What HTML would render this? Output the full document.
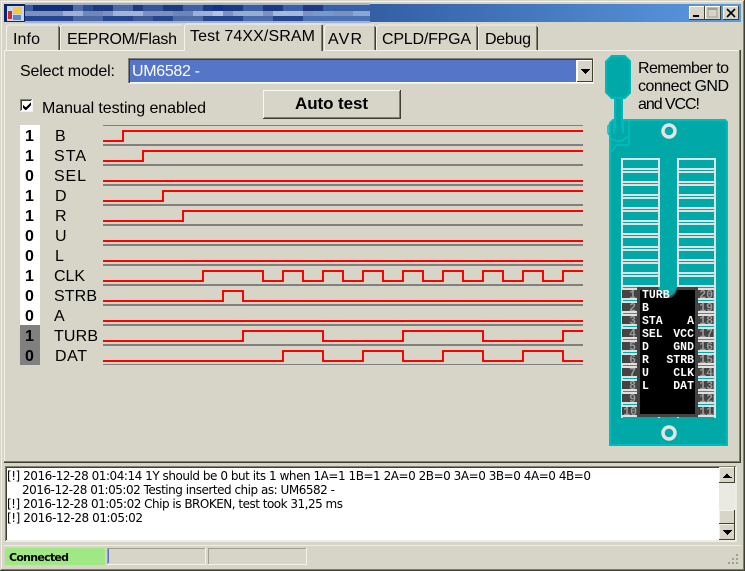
<!DOCTYPE html>
<html><head><meta charset="utf-8"><style>
html,body{margin:0;padding:0;background:#d7d5c8;width:745px;height:571px;overflow:hidden}
svg{display:block}
text{font-family:"Liberation Sans",sans-serif;fill:#000;font-size:16px}
.l text{font-size:12px;font-family:"DejaVu Sans","Liberation Sans",sans-serif}
.m text{font-family:"Liberation Mono",monospace;font-weight:bold;font-size:11.5px}
</style></head><body>
<svg width="745" height="571" viewBox="0 0 745 571" xmlns="http://www.w3.org/2000/svg" shape-rendering="crispEdges">
<defs><linearGradient id="tb" x1="0" x2="1" y1="0" y2="0"><stop offset="0" stop-color="#0a246a"/><stop offset="1" stop-color="#5c9ae0"/></linearGradient></defs>
<rect width="745" height="571" fill="#d7d5c8"/>
<!-- window frame -->
<rect x="0" y="570" width="745" height="1" fill="#404030"/><rect x="744" y="0" width="1" height="571" fill="#404030"/>
<rect x="743" y="1" width="1" height="569" fill="#817f70"/><rect x="1" y="569" width="743" height="1" fill="#817f70"/>
<rect x="1" y="1" width="742" height="1" fill="#f2f1ea"/><rect x="1" y="1" width="1" height="568" fill="#f2f1ea"/>
<!-- title -->
<rect x="4" y="4" width="737" height="18" fill="url(#tb)"/>
<rect x="25" y="3" width="345" height="20" fill="#a4b2d0"/>
<rect x="25" y="5" width="345" height="6" fill="#1c3a82"/>
<rect x="25" y="16" width="345" height="5" fill="#24468e"/>
<rect x="25" y="11" width="345" height="5" fill="#7d90c0"/>
<rect x="25" y="5" width="8" height="6" fill="#3e5c9c"/><rect x="33" y="5" width="40" height="6" fill="#10307a"/><rect x="73" y="5" width="10" height="6" fill="#4f6ca8"/><rect x="83" y="5" width="10" height="6" fill="#2a4c92"/><rect x="113" y="5" width="20" height="6" fill="#4a68a8"/><rect x="143" y="5" width="20" height="6" fill="#345698"/><rect x="183" y="5" width="20" height="6" fill="#3f60a2"/><rect x="213" y="5" width="10" height="6" fill="#123484"/><rect x="243" y="5" width="20" height="6" fill="#3a5ea4"/><rect x="283" y="5" width="20" height="6" fill="#3a60a6"/><rect x="323" y="5" width="47" height="6" fill="#3660a8"/>
<rect x="63" y="11" width="20" height="5" fill="#a0b0d4"/><rect x="83" y="11" width="20" height="5" fill="#7088b8"/><rect x="113" y="11" width="30" height="5" fill="#a4b2d4"/><rect x="173" y="11" width="20" height="5" fill="#6c86ba"/><rect x="193" y="11" width="20" height="5" fill="#a0b0d4"/><rect x="213" y="11" width="10" height="5" fill="#b4c4e0"/><rect x="233" y="11" width="30" height="5" fill="#98acd0"/><rect x="273" y="11" width="30" height="5" fill="#a8b8d8"/><rect x="313" y="11" width="20" height="5" fill="#7c98c8"/><rect x="353" y="11" width="17" height="5" fill="#8ca6d4"/>
<rect x="73" y="16" width="30" height="5" fill="#4a68a6"/><rect x="133" y="16" width="20" height="5" fill="#3a5a9c"/><rect x="173" y="16" width="30" height="5" fill="#4d6ca8"/><rect x="243" y="16" width="30" height="5" fill="#4a6cac"/><rect x="303" y="16" width="67" height="5" fill="#4a72b4"/>
<!-- app icon -->
<rect x="4" y="4" width="21" height="18" fill="#0a246a"/><rect x="7" y="6" width="17" height="15" fill="#c8d8e8"/>
<rect x="8" y="11" width="4" height="8" fill="#c83030"/><rect x="13" y="7" width="9" height="7" fill="#f8c838"/><rect x="13" y="15" width="8" height="5" fill="#5888d0"/>
<!-- title buttons -->
<g>
<rect x="689" y="6" width="16" height="14" fill="#d7d5c8"/><path d="M689 6h15v1h-15zM689 6h1v13h-1z" fill="#fff"/><path d="M704 6h1v14h-1zM689 19h16v1h-16z" fill="#404030"/><rect x="693" y="15" width="6" height="2" fill="#000"/>
<rect x="705" y="6" width="16" height="14" fill="#d7d5c8"/><path d="M705 6h15v1h-15zM705 6h1v13h-1z" fill="#fff"/><path d="M720 6h1v14h-1zM705 19h16v1h-16z" fill="#404030"/><rect x="708" y="8" width="9" height="9" fill="none" stroke="#a09e90" stroke-width="1"/><rect x="708" y="8" width="9" height="2" fill="#a09e90"/>
<rect x="723" y="6" width="16" height="14" fill="#d7d5c8"/><path d="M723 6h15v1h-15zM723 6h1v13h-1z" fill="#fff"/><path d="M738 6h1v14h-1zM723 19h16v1h-16z" fill="#404030"/><path d="M727 9l8 8M735 9l-8 8" stroke="#000" stroke-width="1.6" fill="none" shape-rendering="auto"/>
</g>
<!-- panel -->
<rect x="4" y="50" width="737" height="1" fill="#f2f1ea"/><rect x="4" y="50" width="1" height="412" fill="#f2f1ea"/>
<rect x="739" y="50" width="1" height="412" fill="#817f70"/><rect x="740" y="50" width="1" height="413" fill="#404030"/>
<rect x="4" y="461" width="736" height="1" fill="#817f70"/><rect x="4" y="462" width="737" height="1" fill="#404030"/>
<!-- tabs -->
<g fill="none">
<path d="M6.5 50V27l2-2H58" stroke="#f2f1ea"/><path d="M58.5 26V50" stroke="#817f70"/><path d="M59.5 27V50" stroke="#404030"/>
<path d="M60.5 50V27l2-2H182" stroke="#f2f1ea"/>
<path d="M324.5 50V27l2-2H374" stroke="#f2f1ea"/><path d="M374.5 26V50" stroke="#817f70"/><path d="M375.5 27V50" stroke="#404030"/>
<path d="M376.5 50V27l2-2H476" stroke="#f2f1ea"/><path d="M476.5 26V50" stroke="#817f70"/><path d="M477.5 27V50" stroke="#404030"/>
<path d="M478.5 50V27l2-2H536" stroke="#f2f1ea"/><path d="M536.5 26V50" stroke="#817f70"/><path d="M537.5 27V50" stroke="#404030"/>
</g>
<rect x="184" y="25" width="139" height="27" fill="#d7d5c8"/>
<path d="M184.5 51V26l2-2H321" stroke="#f2f1ea" fill="none"/><rect x="322" y="25" width="1" height="26" fill="#404030"/><rect x="321" y="25" width="1" height="26" fill="#817f70"/>
<text x="13" y="44" textLength="27">Info</text>
<text x="67" y="44" textLength="110">EEPROM/Flash</text>
<text x="190" y="41" textLength="125">Test 74XX/SRAM</text>
<text x="328" y="44" textLength="34">AVR</text>
<text x="382" y="44" textLength="89">CPLD/FPGA</text>
<text x="485" y="44" textLength="46">Debug</text>
<!-- model row -->
<text x="20" y="76" textLength="95">Select model:</text>
<rect x="128" y="58" width="466" height="26" fill="#eeede5"/>
<rect x="128" y="58" width="465" height="1" fill="#817f70"/><rect x="128" y="58" width="1" height="25" fill="#817f70"/>
<rect x="129" y="59" width="464" height="1" fill="#404030"/><rect x="129" y="59" width="1" height="24" fill="#404030"/>
<rect x="130" y="60" width="463" height="23" fill="#fff"/>
<rect x="130" y="60" width="446" height="22" fill="#5575c9"/>
<text x="132" y="76" textLength="68" style="fill:#fff">UM6582 -</text>
<rect x="577" y="60" width="16" height="22" fill="#d7d5c8"/><path d="M577 60h15v1h-15zM577 60h1v21h-1z" fill="#fff"/><path d="M592 60h1v22h-1zM577 81h16v1h-16z" fill="#404030"/>
<path d="M581 69h9v1h-1v1h-1v1h-1v1h-1v1h-1v-1h-1v-1h-1v-1h-1v-1h-1z" fill="#000"/>
<!-- checkbox -->
<rect x="20" y="99" width="13" height="13" fill="#f2f1ea"/><rect x="20" y="99" width="12" height="1" fill="#817f70"/><rect x="20" y="99" width="1" height="12" fill="#817f70"/><rect x="21" y="100" width="10" height="1" fill="#404030"/><rect x="21" y="100" width="1" height="10" fill="#404030"/><rect x="22" y="101" width="10" height="10" fill="#fff"/>
<path d="M23 105v3l2 2 1 0 5-5v-3l-5 5h-1z" fill="#000"/>
<text x="42" y="113" textLength="164">Manual testing enabled</text>
<!-- button -->
<rect x="263" y="90" width="138" height="29" fill="#d7d5c8"/><path d="M263 90h137v1h-137zM263 90h1v28h-1z" fill="#f8f8f2"/><path d="M400 90h1v29h-1zM263 118h138v1h-138z" fill="#404030"/><path d="M399 91h1v27h-1zM264 117h136v1h-136z" fill="#817f70"/>
<text x="295" y="109" textLength="73" style="font-weight:bold;font-size:17px">Auto test</text>
<!-- values -->
<rect x="20" y="125" width="20" height="200" fill="#fff"/><rect x="20" y="325" width="20" height="40" fill="#808080"/>
<g text-anchor="middle">
<text x="29.500" y="141" style="font-weight:bold">1</text><text x="29.500" y="161" style="font-weight:bold">1</text><text x="29.500" y="181" style="font-weight:bold">0</text><text x="29.500" y="201" style="font-weight:bold">1</text><text x="29.500" y="221" style="font-weight:bold">1</text><text x="29.500" y="241" style="font-weight:bold">0</text><text x="29.500" y="261" style="font-weight:bold">0</text><text x="29.500" y="281" style="font-weight:bold">1</text><text x="29.500" y="301" style="font-weight:bold">0</text><text x="29.500" y="321" style="font-weight:bold">0</text><text x="29.500" y="341" style="font-weight:bold">1</text><text x="29.500" y="361" style="font-weight:bold">0</text>
</g>
<text x="55" y="141">B</text><text x="54" y="161" textLength="32">STA</text><text x="54" y="181" textLength="32">SEL</text><text x="55" y="201">D</text><text x="55" y="221">R</text><text x="55" y="241">U</text><text x="55" y="261">L</text><text x="54" y="281" textLength="31">CLK</text><text x="54" y="301" textLength="43">STRB</text><text x="54" y="321">A</text><text x="54" y="341" textLength="44">TURB</text><text x="55" y="361" textLength="32">DAT</text>
<!-- grey lines -->
<g fill="#808080">
<rect x="103" y="125" width="480" height="1"/>
<rect x="103" y="144" width="480" height="2"/><rect x="103" y="164" width="480" height="2"/><rect x="103" y="184" width="480" height="2"/><rect x="103" y="204" width="480" height="2"/><rect x="103" y="224" width="480" height="2"/><rect x="103" y="244" width="480" height="2"/><rect x="103" y="264" width="480" height="2"/><rect x="103" y="284" width="480" height="2"/><rect x="103" y="304" width="480" height="2"/><rect x="103" y="324" width="480" height="2"/><rect x="103" y="344" width="480" height="2"/><rect x="103" y="364" width="480" height="1"/>
</g>
<!-- waves -->
<g fill="none" stroke="#ff0000" stroke-width="2" stroke-linejoin="miter" shape-rendering="geometricPrecision">
<path d="M103 141H123V131H583"/>
<path d="M103 161H143V151H583"/>
<path d="M103 181H583"/>
<path d="M103 201H163V191H583"/>
<path d="M103 221H183V211H583"/>
<path d="M103 241H583"/>
<path d="M103 261H583"/>
<path d="M103 281H203V271H263V281H283V271H303V281H323V271H343V281H363V271H383V281H403V271H423V281H443V271H463V281H483V271H503V281H523V271H543V281H563V271H583"/>
<path d="M103 301H223V291H243V301H583"/>
<path d="M103 321H583"/>
<path d="M103 341H243V331H323V341H403V331H483V341H563V331H583"/>
<path d="M103 361H283V351H323V361H363V351H403V361H443V351H483V361H523V351H563V361H583"/>
</g>
<!-- note -->
<text x="638" y="73" textLength="91">Remember to</text>
<text x="638" y="91" textLength="91">connect GND</text>
<text x="638" y="109" textLength="62">and VCC!</text>
<!-- socket -->
<path d="M610 445V123l3-3H725l2 2V445z" fill="#00a8a8" stroke="#00bcbc" stroke-width="2" shape-rendering="auto"/>
<!-- lever -->
<path d="M611 55H625L631 61V93L625 99H623V128H614V99H611L605 93V61z" fill="#00b8b8"/>
<path d="M612 57H624L629 62V92L624 97H612L607 92V62z" fill="#00a8a8"/>
<rect x="616" y="99" width="5" height="29" fill="#00a8a8"/>
<path d="M614 120V133M623 120V133M611 123L608 126V133L610 136V138L616 141H622L627 137M629 120V145H617L611 152M610 138V150" fill="none" stroke="#00c0c0" stroke-width="1.500" shape-rendering="auto"/>
<!-- holes -->
<circle cx="669" cy="131" r="6" fill="none" stroke="#e4e4e4" stroke-width="3.500" shape-rendering="auto"/>
<circle cx="669" cy="433" r="6" fill="none" stroke="#e4e4e4" stroke-width="3.500" shape-rendering="auto"/>
<!-- slots -->
<rect x="621" y="158" width="39" height="260" fill="#e0e0e0"/><rect x="677" y="158" width="39" height="260" fill="#e0e0e0"/>
<path d="M640.500 160V418M696.500 160V418" stroke="#00a8a8" stroke-width="35" stroke-dasharray="8 2 1 2" fill="none"/>
<!-- chip -->
<path d="M637 287H658C659 292 663 296 668 296C673 296 676 292 677 287H698V417H637z" fill="#444"/>
<path d="M640 290H660C662 295 665 298 669 298C673 298 676 295 677 290H695V414H640z" fill="#000"/>
<path d="M658 287H677C676 292 673 295 668 295C663 295 659 292 658 287z" fill="#00a8a8" shape-rendering="auto"/>
<!-- pins -->
<g fill="#444">
<rect x="622" y="290" width="15" height="8"/><rect x="622" y="303" width="15" height="8"/><rect x="622" y="316" width="15" height="8"/><rect x="622" y="329" width="15" height="8"/><rect x="622" y="342" width="15" height="8"/><rect x="622" y="355" width="15" height="8"/><rect x="622" y="368" width="15" height="8"/><rect x="622" y="381" width="15" height="8"/><rect x="622" y="394" width="15" height="8"/><rect x="622" y="407" width="15" height="8"/>
<rect x="698" y="290" width="15" height="8"/><rect x="698" y="303" width="15" height="8"/><rect x="698" y="316" width="15" height="8"/><rect x="698" y="329" width="15" height="8"/><rect x="698" y="342" width="15" height="8"/><rect x="698" y="355" width="15" height="8"/><rect x="698" y="368" width="15" height="8"/><rect x="698" y="381" width="15" height="8"/><rect x="698" y="394" width="15" height="8"/><rect x="698" y="407" width="15" height="8"/>
</g>
<g class="m" text-anchor="end">
<text x="636" y="298" style="fill:#999">1</text><text x="636" y="311" style="fill:#999">2</text><text x="636" y="324" style="fill:#999">3</text><text x="636" y="337" style="fill:#999">4</text><text x="636" y="350" style="fill:#999">5</text><text x="636" y="363" style="fill:#999">6</text><text x="636" y="376" style="fill:#999">7</text><text x="636" y="389" style="fill:#999">8</text><text x="636" y="402" style="fill:#999">9</text><text x="637" y="415" style="fill:#999">10</text>
<text x="713" y="298" style="fill:#999">20</text><text x="713" y="311" style="fill:#999">19</text><text x="713" y="324" style="fill:#999">18</text><text x="713" y="337" style="fill:#999">17</text><text x="713" y="350" style="fill:#999">16</text><text x="713" y="363" style="fill:#999">15</text><text x="713" y="376" style="fill:#999">14</text><text x="713" y="389" style="fill:#999">13</text><text x="713" y="402" style="fill:#999">12</text><text x="713" y="415" style="fill:#999">11</text>
<text x="694" y="324" style="fill:#fff">A</text><text x="694" y="337" style="fill:#fff">VCC</text><text x="694" y="350" style="fill:#fff">GND</text><text x="694" y="363" style="fill:#fff">STRB</text><text x="694" y="376" style="fill:#fff">CLK</text><text x="694" y="389" style="fill:#fff">DAT</text>
</g>
<g class="m">
<text x="642" y="298" style="fill:#fff">TURB</text><text x="642" y="311" style="fill:#fff">B</text><text x="642" y="324" style="fill:#fff">STA</text><text x="642" y="337" style="fill:#fff">SEL</text><text x="642" y="350" style="fill:#fff">D</text><text x="642" y="363" style="fill:#fff">R</text><text x="642" y="376" style="fill:#fff">U</text><text x="642" y="389" style="fill:#fff">L</text>
</g>
<!-- log -->
<rect x="5" y="466" width="732" height="76" fill="#eeede5"/>
<rect x="5" y="466" width="731" height="1" fill="#817f70"/><rect x="5" y="466" width="1" height="75" fill="#817f70"/>
<rect x="6" y="467" width="729" height="1" fill="#404030"/><rect x="6" y="467" width="1" height="73" fill="#404030"/>
<rect x="7" y="468" width="712" height="72" fill="#fff"/>
<g class="l">
<text x="7" y="480" textLength="584">[!] 2016-12-28 01:04:14 1Y should be 0 but its 1 when 1A=1 1B=1 2A=0 2B=0 3A=0 3B=0 4A=0 4B=0</text>
<text x="22" y="494" textLength="313">2016-12-28 01:05:02 Testing inserted chip as: UM6582 -</text>
<text x="7" y="508" textLength="336">[!] 2016-12-28 01:05:02 Chip is BROKEN, test took 31,25 ms</text>
<text x="7" y="522" textLength="136">[!] 2016-12-28 01:05:02</text>
</g>
<!-- scrollbar -->
<rect x="719" y="467" width="16" height="73" fill="#eae9e2"/>
<rect x="719" y="467" width="16" height="16" fill="#d7d5c8"/><path d="M719 467h15v1h-15zM719 467h1v15h-1z" fill="#f2f1ea"/><path d="M734 467h1v16h-1zM719 482h16v1h-16z" fill="#404030"/><path d="M726 473h1v1h1v1h1v1h1v1h2v1h-9v-1h1v-1h1v-1h1v-1h1z" fill="#000"/>
<rect x="719" y="510" width="16" height="14" fill="#d7d5c8"/><path d="M719 510h15v1h-15zM719 510h1v13h-1z" fill="#f2f1ea"/><path d="M734 510h1v14h-1zM719 523h16v1h-16z" fill="#404030"/>
<rect x="719" y="524" width="16" height="16" fill="#d7d5c8"/><path d="M719 524h15v1h-15zM719 524h1v15h-1z" fill="#f2f1ea"/><path d="M734 524h1v16h-1zM719 539h16v1h-16z" fill="#404030"/><path d="M723 530h9v1h-1v1h-1v1h-1v1h-1v1h-1v-1h-1v-1h-1v-1h-1v-1h-1z" fill="#000"/>
<!-- status -->
<rect x="4" y="545" width="737" height="1" fill="#eeede5"/>
<rect x="5" y="548" width="100" height="17" fill="#a0e884"/>
<text x="9" y="561" textLength="60" style="font-family:'DejaVu Sans','Liberation Sans',sans-serif;font-size:11px;font-weight:bold">Connected</text>
<path d="M107 564V548H205" stroke="#a09e90" fill="none" transform="translate(.5 .5)"/><path d="M206 548V565H107" stroke="#f2f1ea" fill="none" transform="translate(-.5 -.5)"/>
<path d="M208 564V548H306" stroke="#a09e90" fill="none" transform="translate(.5 .5)"/><path d="M307 548V565H208" stroke="#f2f1ea" fill="none" transform="translate(-.5 -.5)"/>
<rect x="108" y="549" width="1" height="14" fill="#5575c9"/>
<!-- grip -->
<g fill="#a09e90"><rect x="736" y="554" width="2" height="2"/><rect x="732" y="558" width="2" height="2"/><rect x="736" y="558" width="2" height="2"/><rect x="728" y="562" width="2" height="2"/><rect x="732" y="562" width="2" height="2"/><rect x="736" y="562" width="2" height="2"/></g>
</svg>
</body></html>
